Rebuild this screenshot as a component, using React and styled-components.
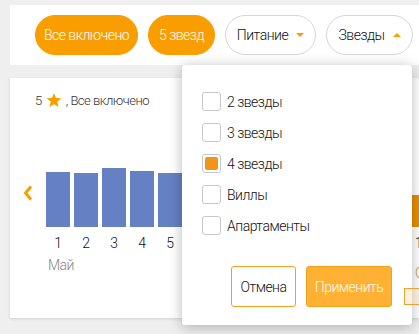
import React from "react";
import styled, { createGlobalStyle } from "styled-components";

const Global = createGlobalStyle`
  html, body { margin: 0; padding: 0; background: #efefef; }
  body { font-family: "Roboto", "Liberation Sans", sans-serif; font-weight: 300; letter-spacing: -0.5px; overflow: hidden; }
  button { letter-spacing: inherit; font-weight: inherit; }
  * { box-sizing: border-box; }
`;

const Page = styled.div`
  position: relative;
  width: 419px;
  height: 334px;
  padding: 5px 0 0 10px;
`;

const TopBar = styled.div`
  height: 60px;
  background: #fff;
  display: flex;
  align-items: center;
  gap: 10px;
  padding-left: 25px;
`;

const Pill = styled.button`
  height: 40px;
  border-radius: 20px;
  font-family: inherit;
  font-size: 14px;
  display: flex;
  align-items: center;
  justify-content: center;
  gap: 8px;
  width: ${(p) => p.$w}px;
  padding: 0;
  cursor: pointer;
  border: 1px solid ${(p) => (p.$active ? "#fa9e00" : "#d6d6d6")};
  background: ${(p) => (p.$active ? "#fa9e00" : "#fff")};
  color: ${(p) => (p.$active ? "#fff" : "#111")};
`;

const Caret = styled.span`
  width: 0;
  height: 0;
  border-left: 4px solid transparent;
  border-right: 4px solid transparent;
  ${(p) => (p.$up ? "border-bottom: 4px solid #fa9e00;" : "border-top: 4px solid #fa9e00;")}
`;

const Card = styled.div`
  margin-top: 13px;
  height: 240px;
  background: #fff;
  box-shadow: 0 1px 3px rgba(0, 0, 0, 0.12);
  padding-top: 15px;
  overflow: hidden;
`;

const Header = styled.div`
  display: flex;
  align-items: center;
  gap: 4px;
  margin-left: 25px;
  font-size: 13px;
  color: #333;
  height: 14px;
`;

const ChartRow = styled.div`
  display: flex;
  align-items: flex-end;
  height: 144px;
  padding-left: 13px;
`;

const Arrow = styled.div`
  width: 10px;
  margin-right: 13px;
  margin-bottom: 50px;
  display: flex;
`;

const Days = styled.div`
  display: flex;
  align-items: flex-end;
  gap: 4px;
`;

const Day = styled.div`
  width: 24px;
  display: flex;
  flex-direction: column;
  align-items: center;
`;

const Bar = styled.div`
  width: 24px;
  background: ${(p) => (p.$sel ? "#e88f00" : "#6680c4")};
`;

const DayLabel = styled.div`
  margin-top: 8px;
  height: 16px;
  line-height: 16px;
  font-size: 14px;
  color: #111;
  white-space: nowrap;
`;

const Month = styled.div`
  margin: 6px 0 0 38px;
  font-size: 14px;
  color: #888;
  line-height: 16px;
`;

const Popup = styled.div`
  position: absolute;
  left: 182px;
  top: 65px;
  width: 230px;
  height: 260px;
  background: #fff;
  border-radius: 3px;
  box-shadow: 0 2px 14px rgba(0, 0, 0, 0.28);
  padding: 21px 20px 0 20px;
  z-index: 2;
`;

const Option = styled.label`
  display: flex;
  align-items: center;
  gap: 6px;
  height: 31px;
  font-size: 14px;
  color: #111;
`;

const Check = styled.span`
  width: 19px;
  height: 19px;
  border: 1px solid #c9c9c9;
  border-radius: 3px;
  padding: 2px;
  display: flex;
  &::after {
    content: "";
    flex: 1;
    border-radius: 2px;
    background: ${(p) => (p.$on ? "#f0951a" : "transparent")};
  }
`;

const Actions = styled.div`
  display: flex;
  justify-content: flex-end;
  gap: 10px;
  margin-top: 25px;
`;

const Btn = styled.button`
  height: 41px;
  width: ${(p) => p.$w}px;
  border-radius: 3px;
  border: 1px solid #f3a21f;
  font-family: inherit;
  font-size: 14px;
  background: ${(p) => (p.$primary ? "#feb132" : "#fff")};
  color: ${(p) => (p.$primary ? "#fff" : "#111")};
`;

const Marker = styled.div`
  position: absolute;
  left: 404px;
  top: 288px;
  width: 24px;
  height: 17px;
  border: 1px solid #f0a030;
  background: rgba(250, 200, 120, 0.25);
  z-index: 3;
`;

const OrangeNote = styled.div`
  position: absolute;
  left: 415px;
  top: 265px;
  font-size: 14px;
  line-height: 16px;
  color: #e88f00;
`;

const bars = [55, 54, 59, 56, 54, 50, 48, 52, 57, 55, 53, 49, 51, 32];

export default function App() {
  return (
    <Page>
      <Global />
      <TopBar>
        <Pill $active $w={103}>Все включено</Pill>
        <Pill $active $w={67}>5 звезд</Pill>
        <Pill $w={91}>
          Питание <Caret />
        </Pill>
        <Pill $w={87}>
          Звезды <Caret $up />
        </Pill>
      </TopBar>
      <Card>
        <Header>
          <span>5</span>
          <svg width="16" height="15" viewBox="0 0 24 23">
            <path
              d="M12 0l3.1 7.6 8.2.6-6.3 5.3 2 8-7-4.4-7 4.4 2-8L.7 8.2l8.2-.6z"
              fill="#fa9e00"
            />
          </svg>
          <span>, Все включено</span>
        </Header>
        <ChartRow>
          <Arrow>
            <svg width="10" height="16" viewBox="0 0 10 16">
              <path d="M8 1.5L2.5 8 8 14.5" fill="none" stroke="#fa9e00" strokeWidth="3" />
            </svg>
          </Arrow>
          <Days>
            {bars.map((h, i) => (
              <Day key={i}>
                <Bar $sel={i === 13} style={{ height: h }} />
                <DayLabel>{i + 1}</DayLabel>
              </Day>
            ))}
          </Days>
        </ChartRow>
        <Month>Май</Month>
      </Card>
      <OrangeNote>О</OrangeNote>
      <Popup>
        <Option><Check />2 звезды</Option>
        <Option><Check />3 звезды</Option>
        <Option><Check $on />4 звезды</Option>
        <Option><Check />Виллы</Option>
        <Option><Check />Апартаменты</Option>
        <Actions>
          <Btn $w={65}>Отмена</Btn>
          <Btn $primary $w={86}>Применить</Btn>
        </Actions>
      </Popup>
      <Marker />
    </Page>
  );
}
